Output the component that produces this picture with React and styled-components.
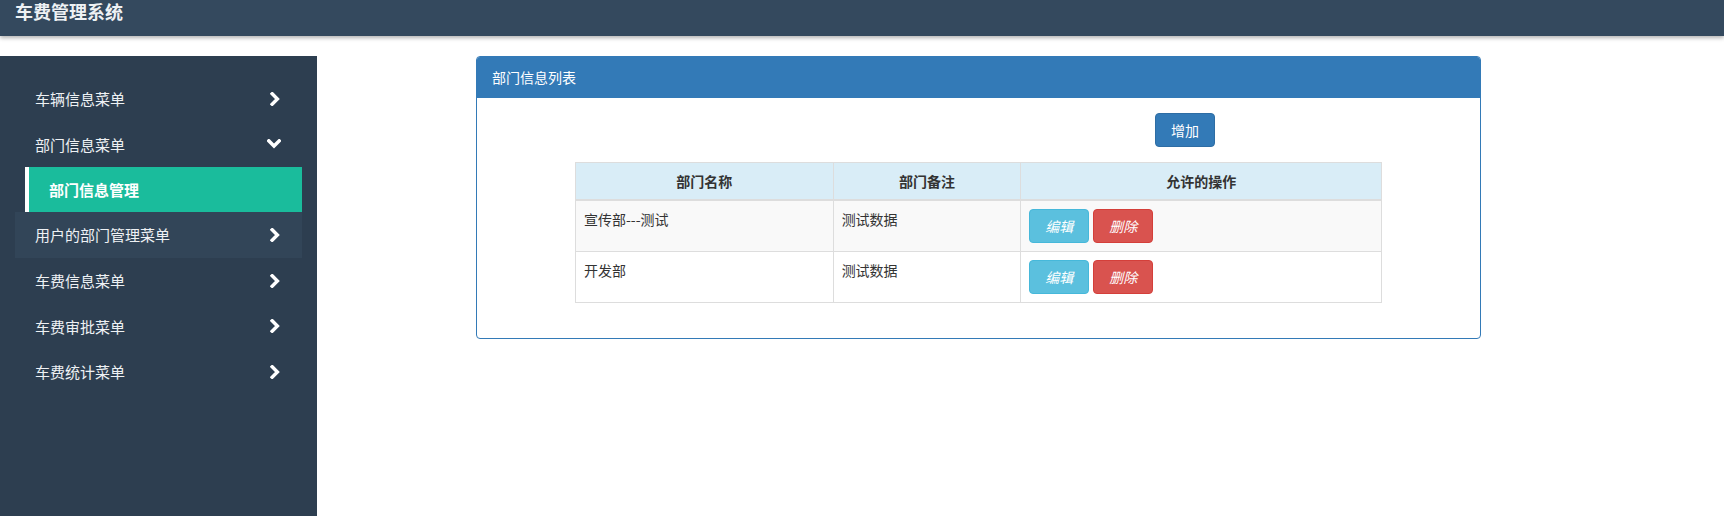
import React from "react";
import styled, { createGlobalStyle } from "styled-components";

const Global = createGlobalStyle`
  html, body { margin: 0; padding: 0; background: #fff; }
  body { font-family: "Noto Sans CJK SC", "Noto Sans", "Liberation Sans", sans-serif; color: #333; }
  * { box-sizing: border-box; }
`;

const Header = styled.header`
  height: 36px;
  background: #34495e;
  box-shadow: 0 2px 4px rgba(0, 0, 0, 0.3);
  position: relative;
  z-index: 2;
`;

const Brand = styled.div`
  padding-left: 15px;
  line-height: 22px;
  font-size: 18px;
  font-weight: 700;
  color: #eef1f4;
`;

const Main = styled.div`
  display: flex;
  margin-top: 20px;
`;

const Sidebar = styled.nav`
  width: 317px;
  min-height: 460px;
  background: #2d3e50;
  padding: 20px 15px;
`;

const MenuItem = styled.div`
  height: 45.6px;
  display: flex;
  align-items: center;
  justify-content: space-between;
  padding: 0 21px 0 20px;
  font-size: 15px;
  color: #eef1f4;
  background: ${(p) => (p.$hover ? "#324558" : "transparent")};
`;

const SubItem = styled.div`
  height: 45px;
  display: flex;
  align-items: center;
  margin-left: 10px;
  border-left: 4px solid #fff;
  padding-left: 20px;
  font-size: 15px;
  font-weight: 700;
  color: #fff;
  background: #1abc9c;
`;

const Content = styled.div`
  flex: 1;
  padding-left: 159px;
`;

const Panel = styled.div`
  width: 1005px;
  border: 1px solid #337ab7;
  border-radius: 4px;
  background: #fff;
  overflow: hidden;
`;

const PanelHeading = styled.div`
  background: #337ab7;
  color: #fff;
  padding: 10px 15px;
  line-height: 20px;
  font-size: 14px;
  border-bottom: 1px solid #337ab7;
`;

const PanelBody = styled.div`
  padding: 15px;
`;

const Toolbar = styled.div`
  display: flex;
  padding-left: 663px;
  margin-bottom: 15px;
`;

const Btn = styled.button`
  height: 34px;
  width: 60px;
  padding: 0;
  font-family: inherit;
  font-size: 14px;
  line-height: 20px;
  border-radius: 4px;
  color: #fff;
  font-style: ${(p) => (p.$italic ? "italic" : "normal")};
  background: ${(p) => p.$bg};
  border: 1px solid ${(p) => p.$border};
  cursor: pointer;
`;

const Table = styled.table`
  width: 807px;
  margin: 0 auto 20px;
  border-collapse: collapse;
  border: 1px solid #ddd;
  font-size: 14px;
`;

const Th = styled.th`
  background: #d9edf7;
  padding: 8px;
  line-height: 20px;
  font-weight: 700;
  text-align: center;
  border: 1px solid #ddd;
  border-bottom: 2px solid #ddd;
  color: #333;
`;

const Tr = styled.tr`
  background: ${(p) => (p.$striped ? "#f9f9f9" : "#fff")};
`;

const Td = styled.td`
  padding: 8px;
  line-height: 20px;
  vertical-align: top;
  border: 1px solid #ddd;
  color: #333;
`;

const Actions = styled.div`
  display: flex;
  gap: 4px;
`;

const Chevron = ({ down }) =>
  down ? (
    <svg width="14" height="10" viewBox="0 0 14 10">
      <polyline points="1.8,1.8 7,7 12.2,1.8" fill="none" stroke="#fff" strokeWidth="3.4" strokeLinecap="square" />
    </svg>
  ) : (
    <svg width="11" height="14" viewBox="0 0 11 14">
      <polyline points="2.2,1.8 7.4,7 2.2,12.2" fill="none" stroke="#fff" strokeWidth="3.4" strokeLinecap="square" />
    </svg>
  );

const menus = [
  { label: "车辆信息菜单" },
  { label: "部门信息菜单", open: true },
  { label: "用户的部门管理菜单", hover: true },
  { label: "车费信息菜单" },
  { label: "车费审批菜单" },
  { label: "车费统计菜单" },
];

const rows = [
  { name: "宣传部---测试", note: "测试数据" },
  { name: "开发部", note: "测试数据" },
];

export default function App() {
  return (
    <>
      <Global />
      <Header>
        <Brand>车费管理系统</Brand>
      </Header>
      <Main>
        <Sidebar>
          {menus.map((m) => (
            <React.Fragment key={m.label}>
              <MenuItem $hover={m.hover}>
                <span>{m.label}</span>
                <Chevron down={m.open} />
              </MenuItem>
              {m.open && <SubItem>部门信息管理</SubItem>}
            </React.Fragment>
          ))}
        </Sidebar>
        <Content>
          <Panel>
            <PanelHeading>部门信息列表</PanelHeading>
            <PanelBody>
              <Toolbar>
                <Btn $bg="#337ab7" $border="#2e6da4">增加</Btn>
              </Toolbar>
              <Table>
                <colgroup>
                  <col style={{ width: 258 }} />
                  <col style={{ width: 188 }} />
                  <col style={{ width: 361 }} />
                </colgroup>
                <thead>
                  <tr>
                    <Th>部门名称</Th>
                    <Th>部门备注</Th>
                    <Th>允许的操作</Th>
                  </tr>
                </thead>
                <tbody>
                  {rows.map((r, i) => (
                    <Tr key={r.name} $striped={i % 2 === 0}>
                      <Td>{r.name}</Td>
                      <Td>{r.note}</Td>
                      <Td>
                        <Actions>
                          <Btn $italic $bg="#5bc0de" $border="#46b8da">编辑</Btn>
                          <Btn $italic $bg="#d9534f" $border="#d43f3a">删除</Btn>
                        </Actions>
                      </Td>
                    </Tr>
                  ))}
                </tbody>
              </Table>
            </PanelBody>
          </Panel>
        </Content>
      </Main>
    </>
  );
}
